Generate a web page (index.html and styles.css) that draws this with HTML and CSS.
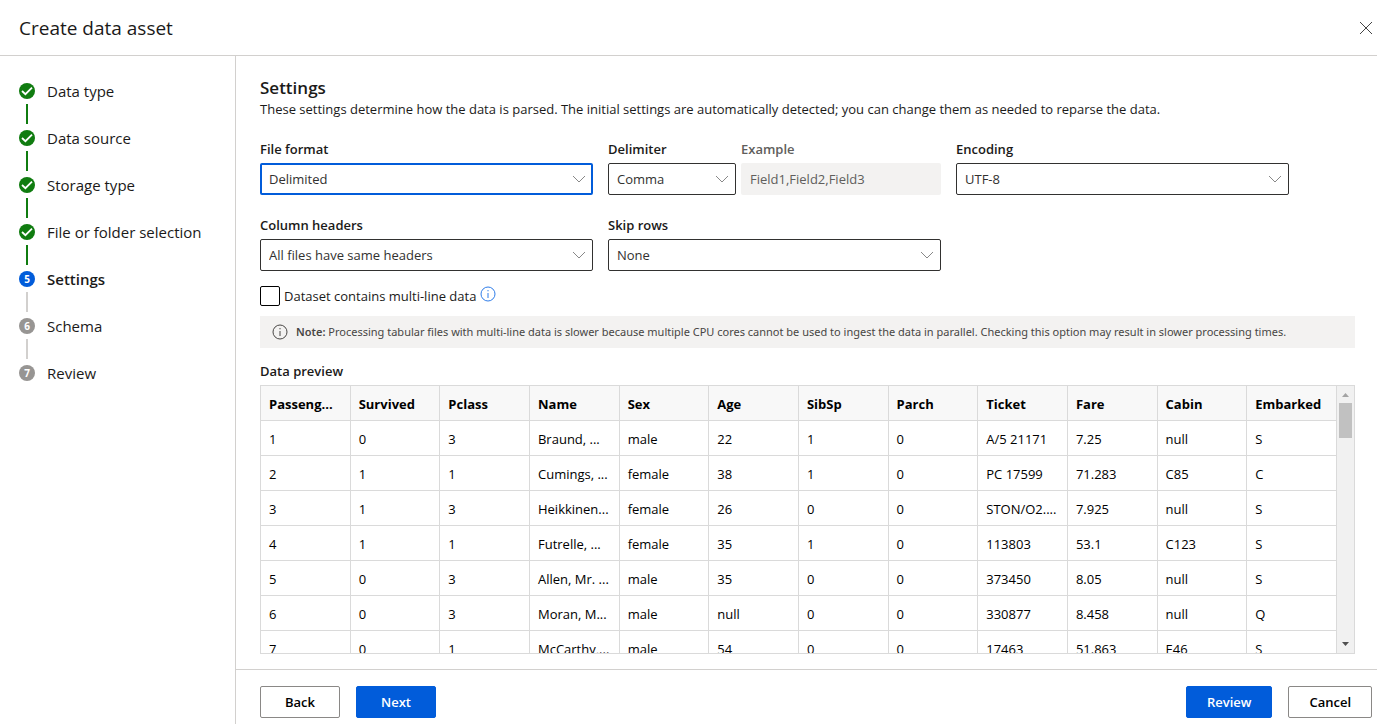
FILE: index.html
```
<!DOCTYPE html>
<html lang="en">
<head>
    <meta charset="UTF-8">
    <meta name="viewport" content="width=device-width, initial-scale=1">
    <title>Create data asset</title>
    <link rel="stylesheet" href="styles.css">
</head>
<body>
    <header class="header">
        <h1 class="header-title">Create data asset</h1>
        <button class="close" type="button" aria-label="Close">
            <svg width="14" height="14" viewBox="0 0 14 14"><path d="M1 1l12 12M13 1L1 13" fill="none" stroke="#444" stroke-width="1"/></svg>
        </button>
    </header>

    <div class="wizard">
        <nav class="sidebar">
            <ol class="steps">
                <li class="step done">
                    <span class="badge"><svg width="16" height="16" viewBox="0 0 16 16"><path d="M3 8l3.400 3.200L13 4.700" fill="none" stroke="#fff" stroke-width="1.800"/></svg></span>
                    <span class="step-label">Data type</span>
                </li>
                <li class="step done">
                    <span class="badge"><svg width="16" height="16" viewBox="0 0 16 16"><path d="M3 8l3.400 3.200L13 4.700" fill="none" stroke="#fff" stroke-width="1.800"/></svg></span>
                    <span class="step-label">Data source</span>
                </li>
                <li class="step done">
                    <span class="badge"><svg width="16" height="16" viewBox="0 0 16 16"><path d="M3 8l3.400 3.200L13 4.700" fill="none" stroke="#fff" stroke-width="1.800"/></svg></span>
                    <span class="step-label">Storage type</span>
                </li>
                <li class="step done">
                    <span class="badge"><svg width="16" height="16" viewBox="0 0 16 16"><path d="M3 8l3.400 3.200L13 4.700" fill="none" stroke="#fff" stroke-width="1.800"/></svg></span>
                    <span class="step-label">File or folder selection</span>
                </li>
                <li class="step current" aria-current="step">
                    <span class="badge">5</span>
                    <span class="step-label">Settings</span>
                </li>
                <li class="step">
                    <span class="badge">6</span>
                    <span class="step-label">Schema</span>
                </li>
                <li class="step">
                    <span class="badge">7</span>
                    <span class="step-label">Review</span>
                </li>
            </ol>
        </nav>

        <main class="main">
            <form class="content" id="settings">
                <h2 class="title">Settings</h2>
                <p class="description">These settings determine how the data is parsed. The initial settings are automatically detected; you can change them as needed to reparse the data.</p>

                <div class="fields">
                    <div class="field">
                        <label for="format">File format</label>
                        <div class="dropdown focused">
                            <select id="format"><option>Delimited</option></select>
                            <svg width="14" height="8" viewBox="0 0 14 8"><path d="M1 1l6 6 6-6" fill="none" stroke="#888"/></svg>
                        </div>
                    </div>
                    <div class="field-pair">
                        <div class="field">
                            <label for="delimiter">Delimiter</label>
                            <div class="dropdown">
                                <select id="delimiter"><option>Comma</option></select>
                                <svg width="14" height="8" viewBox="0 0 14 8"><path d="M1 1l6 6 6-6" fill="none" stroke="#888"/></svg>
                            </div>
                        </div>
                        <div class="field example">
                            <label for="example">Example</label>
                            <input id="example" type="text" value="Field1,Field2,Field3" disabled>
                        </div>
                    </div>
                    <div class="field">
                        <label for="encoding">Encoding</label>
                        <div class="dropdown">
                            <select id="encoding"><option>UTF-8</option></select>
                            <svg width="14" height="8" viewBox="0 0 14 8"><path d="M1 1l6 6 6-6" fill="none" stroke="#888"/></svg>
                        </div>
                    </div>
                    <div class="field">
                        <label for="headers">Column headers</label>
                        <div class="dropdown">
                            <select id="headers"><option>All files have same headers</option></select>
                            <svg width="14" height="8" viewBox="0 0 14 8"><path d="M1 1l6 6 6-6" fill="none" stroke="#888"/></svg>
                        </div>
                    </div>
                    <div class="field">
                        <label for="skip">Skip rows</label>
                        <div class="dropdown">
                            <select id="skip"><option>None</option></select>
                            <svg width="14" height="8" viewBox="0 0 14 8"><path d="M1 1l6 6 6-6" fill="none" stroke="#888"/></svg>
                        </div>
                    </div>
                </div>

                <div class="multiline">
                    <input id="multiline" type="checkbox">
                    <label for="multiline">Dataset contains multi-line data</label>
                    <button class="info" type="button" aria-label="More information">
                        <svg width="16" height="16" viewBox="0 0 16 16"><circle cx="8" cy="8" r="7" fill="none" stroke="currentColor"/><path d="M8 7v5M8 4v1.3" stroke="currentColor"/></svg>
                    </button>
                </div>

                <div class="note">
                    <svg width="16" height="16" viewBox="0 0 16 16"><circle cx="8" cy="8" r="7" fill="none" stroke="currentColor"/><path d="M8 7v5M8 4v1.3" stroke="currentColor"/></svg>
                    <p><strong>Note:</strong> Processing tabular files with multi-line data is slower because multiple CPU cores cannot be used to ingest the data in parallel. Checking this option may result in slower processing times.</p>
                </div>

                <h3 class="preview-title">Data preview</h3>
                <div class="preview">
                    <div class="preview-body">
                        <table>
                            <thead>
                                <tr><th>Passeng...</th><th>Survived</th><th>Pclass</th><th>Name</th><th>Sex</th><th>Age</th><th>SibSp</th><th>Parch</th><th>Ticket</th><th>Fare</th><th>Cabin</th><th>Embarked</th></tr>
                            </thead>
                            <tbody>
                                <tr><td>1</td><td>0</td><td>3</td><td>Braund, ...</td><td>male</td><td>22</td><td>1</td><td>0</td><td>A/5 21171</td><td>7.25</td><td>null</td><td>S</td></tr>
                                <tr><td>2</td><td>1</td><td>1</td><td>Cumings, ...</td><td>female</td><td>38</td><td>1</td><td>0</td><td>PC 17599</td><td>71.283</td><td>C85</td><td>C</td></tr>
                                <tr><td>3</td><td>1</td><td>3</td><td>Heikkinen...</td><td>female</td><td>26</td><td>0</td><td>0</td><td>STON/O2....</td><td>7.925</td><td>null</td><td>S</td></tr>
                                <tr><td>4</td><td>1</td><td>1</td><td>Futrelle, ...</td><td>female</td><td>35</td><td>1</td><td>0</td><td>113803</td><td>53.1</td><td>C123</td><td>S</td></tr>
                                <tr><td>5</td><td>0</td><td>3</td><td>Allen, Mr. ...</td><td>male</td><td>35</td><td>0</td><td>0</td><td>373450</td><td>8.05</td><td>null</td><td>S</td></tr>
                                <tr><td>6</td><td>0</td><td>3</td><td>Moran, M...</td><td>male</td><td>null</td><td>0</td><td>0</td><td>330877</td><td>8.458</td><td>null</td><td>Q</td></tr>
                                <tr><td>7</td><td>0</td><td>1</td><td>McCarthy,...</td><td>male</td><td>54</td><td>0</td><td>0</td><td>17463</td><td>51.863</td><td>E46</td><td>S</td></tr>
                            </tbody>
                        </table>
                    </div>
                    <div class="scrollbar" aria-hidden="true">
                        <svg width="17" height="17" viewBox="0 0 17 17"><path d="M5 11h7L8.500 7z" fill="#a3a3a3"/></svg>
                        <div class="thumb"></div>
                        <svg class="arrow-down" width="17" height="17" viewBox="0 0 17 17"><path d="M5 6h7l-3.500 4z" fill="#505050"/></svg>
                    </div>
                </div>
            </form>

            <footer class="footer">
                <button class="btn" type="button">Back</button>
                <button class="btn primary" type="button">Next</button>
                <button class="btn primary review" type="button">Review</button>
                <button class="btn" type="button">Cancel</button>
            </footer>
        </main>
    </div>
</body>
</html>
```
FILE: styles.css
```
* {
    box-sizing: border-box;
}

body {
    margin: 0;
    height: 100vh;
    display: flex;
    flex-direction: column;
    overflow: hidden;
    background: #fff;
    color: #1b1a19;
    font-family: "Open Sans", "Noto Sans", sans-serif;
    font-size: 13px;
    line-height: 20px;
}

h1, h2, h3, p, ol {
    margin: 0;
    padding: 0;
}

svg {
    display: block;
    flex: none;
}

button, input, select {
    font: inherit;
    color: inherit;
    margin: 0;
}

button {
    cursor: pointer;
}

/* header */
.header {
    flex: none;
    display: flex;
    align-items: center;
    justify-content: space-between;
    height: 56px;
    padding: 0 4px 0 19px;
    border-bottom: 1px solid #d2d0ce;
}

.header-title {
    font-size: 19px;
    font-weight: 400;
    line-height: 24px;
}

.close {
    padding: 0;
    border: none;
    background: none;
}

.wizard {
    flex: 1;
    display: flex;
    min-height: 0;
}

/* steps */
.sidebar {
    flex: none;
    width: 236px;
    padding: 25px 19px;
    border-right: 1px solid #d2d0ce;
}

.steps {
    list-style: none;
}

.step {
    display: grid;
    grid-template-columns: 16px 1fr;
    grid-template-rows: 20px 20px;
    row-gap: 3px;
    column-gap: 12px;
    align-items: center;
    margin-bottom: 4px;
}

.step::after {
    content: "";
    justify-self: center;
    width: 2px;
    height: 20px;
    background: #d2d0ce;
}

.step:last-child::after {
    display: none;
}

.step.done::after {
    background: #107c10;
}

.badge {
    width: 16px;
    height: 16px;
    border-radius: 50%;
    background: #979593;
    color: #fff;
    font-size: 10px;
    font-weight: 700;
    line-height: 16px;
    text-align: center;
}

.done .badge {
    background: #107c10;
}

.current .badge {
    background: #015cda;
}

.step-label {
    font-size: 15px;
    white-space: nowrap;
}

.current .step-label {
    font-weight: 600;
}

/* form */
.main {
    flex: 1;
    display: flex;
    flex-direction: column;
    min-width: 0;
}

.content {
    flex: 1;
    display: flex;
    flex-direction: column;
    min-height: 0;
    padding: 20px 22px 15px 24px;
}

.title {
    font-size: 17px;
    font-weight: 600;
    line-height: 23px;
}

.fields {
    display: grid;
    grid-template-columns: repeat(3, minmax(0, 333px));
    gap: 20px 15px;
    margin-top: 20px;
}

.field {
    display: flex;
    flex-direction: column;
    gap: 4px;
    min-width: 0;
}

.field label {
    font-weight: 600;
}

.field-pair {
    display: grid;
    grid-template-columns: 128fr 200fr;
    gap: 5px;
}

.dropdown {
    display: grid;
    align-items: center;
}

.dropdown select,
.dropdown svg {
    grid-area: 1 / 1;
}

.dropdown svg {
    justify-self: end;
    margin-right: 7px;
    pointer-events: none;
}

.dropdown select {
    appearance: none;
    width: 100%;
    height: 32px;
    padding: 0 28px 0 8px;
    border: 1px solid #323130;
    border-radius: 2px;
    background: #fff;
    color: #323130;
    outline: none;
}

.dropdown.focused select {
    padding-left: 7px;
    border: 2px solid #015cda;
}

.example label {
    color: #605e5c;
}

.example input {
    width: 100%;
    height: 32px;
    padding: 0 9px;
    border: none;
    border-radius: 2px;
    background: #f3f2f1;
    color: #605e5c;
}

.multiline {
    display: flex;
    align-items: center;
    gap: 4px;
    margin-top: 15px;
}

.multiline input {
    appearance: none;
    width: 20px;
    height: 20px;
    border: 1px solid #000;
    border-radius: 2px;
}

.info {
    align-self: flex-start;
    padding: 0;
    border: none;
    background: none;
    color: #2f7de9;
}

.note {
    flex: none;
    display: flex;
    align-items: center;
    gap: 8px;
    min-height: 32px;
    margin-top: 10px;
    padding: 0 12px;
    background: #f3f2f1;
    color: #484644;
    font-family: "Noto Sans", "Open Sans", sans-serif;
    font-size: 11px;
}

.note strong {
    font-weight: 600;
}

/* data preview */
.preview-title {
    margin: 13px 0 4px;
    font-size: 13px;
    font-weight: 600;
}

.preview {
    flex: 1;
    display: flex;
    min-height: 0;
    border: 1px solid #dadada;
}

.preview-body {
    flex: 1;
    min-width: 0;
    overflow: hidden;
}

table {
    width: 100%;
    table-layout: fixed;
    border-collapse: separate;
    border-spacing: 0;
    color: #000;
}

th, td {
    height: 35px;
    padding: 2px 8px 0;
    border-right: 1px solid #dadada;
    border-bottom: 1px solid #dadada;
    overflow: hidden;
    text-align: left;
    white-space: nowrap;
}

th {
    background: #f8f8f8;
    font-weight: 700;
}

.scrollbar {
    flex: none;
    display: flex;
    flex-direction: column;
    width: 17px;
    background: #f1f1f1;
}

.thumb {
    height: 35px;
    margin: 0 2px;
    background: #c1c1c1;
}

.arrow-down {
    margin-top: auto;
}

/* footer */
.footer {
    flex: none;
    display: flex;
    gap: 16px;
    padding: 16px 5px 6px 24px;
    border-top: 1px solid #d2d0ce;
}

.btn {
    height: 32px;
    min-width: 80px;
    padding: 0 20px;
    border: 1px solid #8a8886;
    border-radius: 2px;
    background: #fff;
    color: #000;
    font-weight: 600;
}

.btn.primary {
    border-color: #015cda;
    background: #015cda;
    color: #fff;
}

.review {
    margin-left: auto;
}
```
